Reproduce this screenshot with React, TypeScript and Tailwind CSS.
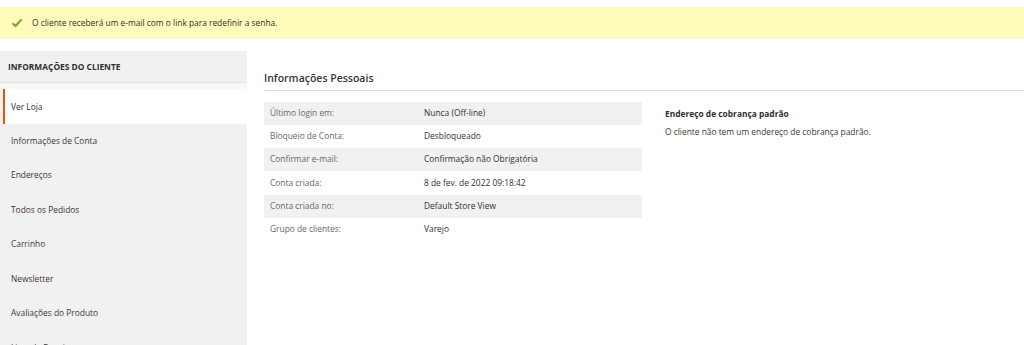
const menu = [
  "Informações de Conta",
  "Endereços",
  "Todos os Pedidos",
  "Carrinho",
  "Newsletter",
  "Avaliações do Produto",
  "Lista de Desejos",
];

const rows = [
  ["Último login em:", "Nunca (Off-line)"],
  ["Bloqueio de Conta:", "Desbloqueado"],
  ["Confirmar e-mail:", "Confirmação não Obrigatória"],
  ["Conta criada:", "8 de fev. de 2022 09:18:42"],
  ["Conta criada no:", "Default Store View"],
  ["Grupo de clientes:", "Varejo"],
];

export default function App() {
  return (
    <div
      className="h-[345px] w-[1024px] overflow-hidden bg-white text-[8.4px] text-[#303030]"
      style={{ fontFamily: '"Open Sans", sans-serif' }}
    >
      {/* message */}
      <div className="mt-[7px] flex h-[32px] items-center bg-[#fffbbb] pl-[11px]">
        <svg width="12" height="10" viewBox="0 0 12 10" className="mr-[9px]">
          <path d="M1.5 5.2 L4.5 8 L10.5 1.5" fill="none" stroke="#79a22e" strokeWidth="2" />
        </svg>
        <span className="text-[#303030]">O cliente receberá um e-mail com o link para redefinir a senha.</span>
      </div>

      <div className="mt-[12px] flex">
        {/* sidebar */}
        <div className="w-[247px] shrink-0 bg-[#f1f1f1]">
          <div className="flex h-[32px] items-center border-b border-[#e3e3e3] pl-[8px] pt-[2px] font-bold uppercase text-[#303030]">
            Informações do Cliente
          </div>
          <div className="h-[6px] bg-[#f8f8f8]" />
          <div className="ml-[3px] flex h-[35px] items-center border-l-[2px] border-[#eb5202] bg-white pl-[6px] pt-[2px] text-[#303030]">
            Ver Loja
          </div>
          {menu.map((m) => (
            <div key={m} className="flex h-[34.5px] items-center pl-[11px] text-[#41362f]">
              {m}
            </div>
          ))}
        </div>

        {/* main */}
        <div className="flex-1 pl-[17px] pt-[20px]">
          <div className="border-b border-[#e3ddd6] pb-[3px] text-[10.5px] font-semibold text-[#41362f]">
            Informações Pessoais
          </div>
          <div className="mt-[11px] flex">
            <div className="w-[378px]">
              {rows.map(([l, v], i) => (
                <div
                  key={l}
                  className={`flex h-[23.2px] items-center ${i % 2 === 0 ? "bg-[#f1f1f1]" : "bg-white"}`}
                >
                  <div className="w-[160px] pl-[6px] text-[#666]">{l}</div>
                  <div className="text-[#303030]">{v}</div>
                </div>
              ))}
            </div>
            <div className="pl-[23px] pt-[6px]">
              <div className="font-bold text-[#303030]">Endereço de cobrança padrão</div>
              <div className="mt-[6px] text-[#41362f]">O cliente não tem um endereço de cobrança padrão.</div>
            </div>
          </div>
        </div>
      </div>
    </div>
  );
}
